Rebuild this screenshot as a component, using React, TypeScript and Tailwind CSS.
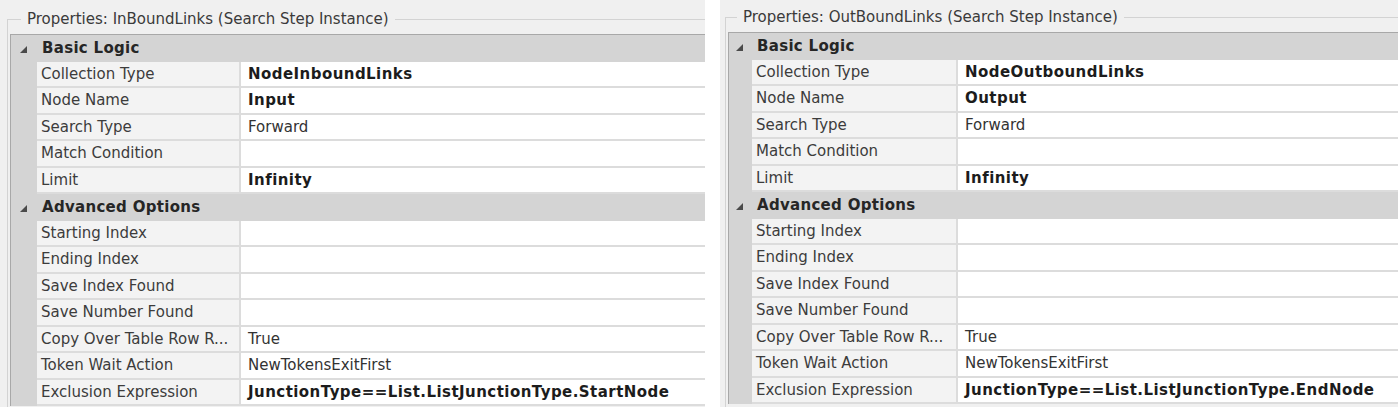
import React from "react";

type Row =
  | { kind: "cat"; label: string }
  | { kind: "prop"; label: string; value?: string; bold?: boolean };

const makeRows = (dir: "in" | "out"): Row[] => [
  { kind: "cat", label: "Basic Logic" },
  { kind: "prop", label: "Collection Type", value: dir === "in" ? "NodeInboundLinks" : "NodeOutboundLinks", bold: true },
  { kind: "prop", label: "Node Name", value: dir === "in" ? "Input" : "Output", bold: true },
  { kind: "prop", label: "Search Type", value: "Forward" },
  { kind: "prop", label: "Match Condition" },
  { kind: "prop", label: "Limit", value: "Infinity", bold: true },
  { kind: "cat", label: "Advanced Options" },
  { kind: "prop", label: "Starting Index" },
  { kind: "prop", label: "Ending Index" },
  { kind: "prop", label: "Save Index Found" },
  { kind: "prop", label: "Save Number Found" },
  { kind: "prop", label: "Copy Over Table Row R...", value: "True" },
  { kind: "prop", label: "Token Wait Action", value: "NewTokensExitFirst" },
  {
    kind: "prop",
    label: "Exclusion Expression",
    value: dir === "in" ? "JunctionType==List.ListJunctionType.StartNode" : "JunctionType==List.ListJunctionType.EndNode",
    bold: true,
  },
];

const Tri = () => (
  <svg width="7" height="7" viewBox="0 0 7 7" className="mt-[3px]">
    <polygon points="7,0 7,7 0,7" fill="#4a4a4a" />
  </svg>
);

type Cfg = {
  wrap: string;
  legend: string;
  grid: string;
  margin: string;
  label: string;
  title: string;
};

const Panel = ({ cfg, rows }: { cfg: Cfg; rows: Row[] }) => (
  <div className={cfg.wrap}>
    <fieldset className="border-l border-t border-[#d3d3d3] h-full">
      <legend className={cfg.legend}>
        <span className="block leading-[20px] text-[15px] text-[#3a3a3a]">{cfg.title}</span>
      </legend>
      <div className={cfg.grid}>
        {rows.map((r, i) =>
          r.kind === "cat" ? (
            <div key={i} className="flex h-[26.5px] bg-[#d4d4d4]">
              <div className={cfg.margin + " flex items-center justify-end"}>
                <Tri />
              </div>
              <div className="flex items-center pl-[5px] font-bold text-[15px] tracking-[0.3px] text-[#262626]">
                {r.label}
              </div>
            </div>
          ) : (
            <div key={i} className="flex h-[26.5px]">
              <div className={cfg.margin + " bg-[#d4d4d4]"} />
              <div
                className={
                  cfg.label +
                  " flex items-center pl-[4px] bg-[#f3f3f3] border-b-2 border-r-2 border-[#dcdcdc] text-[15px] text-[#3c3c3c] whitespace-nowrap overflow-hidden"
                }
              >
                {r.label}
              </div>
              <div
                className={
                  "flex-1 flex items-center pl-[7px] bg-white border-b-2 border-[#dcdcdc] text-[15px] whitespace-nowrap overflow-hidden " +
                  (r.bold ? "font-bold tracking-[0.45px] text-[#1c1c1c]" : "text-[#333333]")
                }
              >
                {r.value ?? ""}
              </div>
            </div>
          )
        )}
      </div>
    </fieldset>
  </div>
);

const leftCfg: Cfg = {
  wrap: "w-[705px] h-[407px] shrink-0 bg-[#f0f0f0] pl-[7px] pt-[9px]",
  legend: "ml-[13px] px-[6px]",
  grid: "ml-[2px] mt-[5px] border-l border-t border-[#a8a8a8]",
  margin: "w-[26px] shrink-0 pr-[10px]",
  label: "w-[204px] shrink-0",
  title: "Properties: InBoundLinks (Search Step Instance)",
};

const rightCfg: Cfg = {
  wrap: "w-[678px] h-[407px] shrink-0 ml-[15px] bg-[#f0f0f0] pl-[5px] pt-[7px]",
  legend: "ml-[11px] px-[6px]",
  grid: "ml-[2px] mt-[5px] border-l border-t border-[#a8a8a8]",
  margin: "w-[23px] shrink-0 pr-[9px]",
  label: "w-[206px] shrink-0",
  title: "Properties: OutBoundLinks (Search Step Instance)",
};

export default function App() {
  return (
    <div
      className="flex w-[1398px] h-[407px] bg-white overflow-hidden"
      style={{ fontFamily: '"DejaVu Sans", Verdana, sans-serif' }}
    >
      <Panel cfg={leftCfg} rows={makeRows("in")} />
      <Panel cfg={rightCfg} rows={makeRows("out")} />
    </div>
  );
}
